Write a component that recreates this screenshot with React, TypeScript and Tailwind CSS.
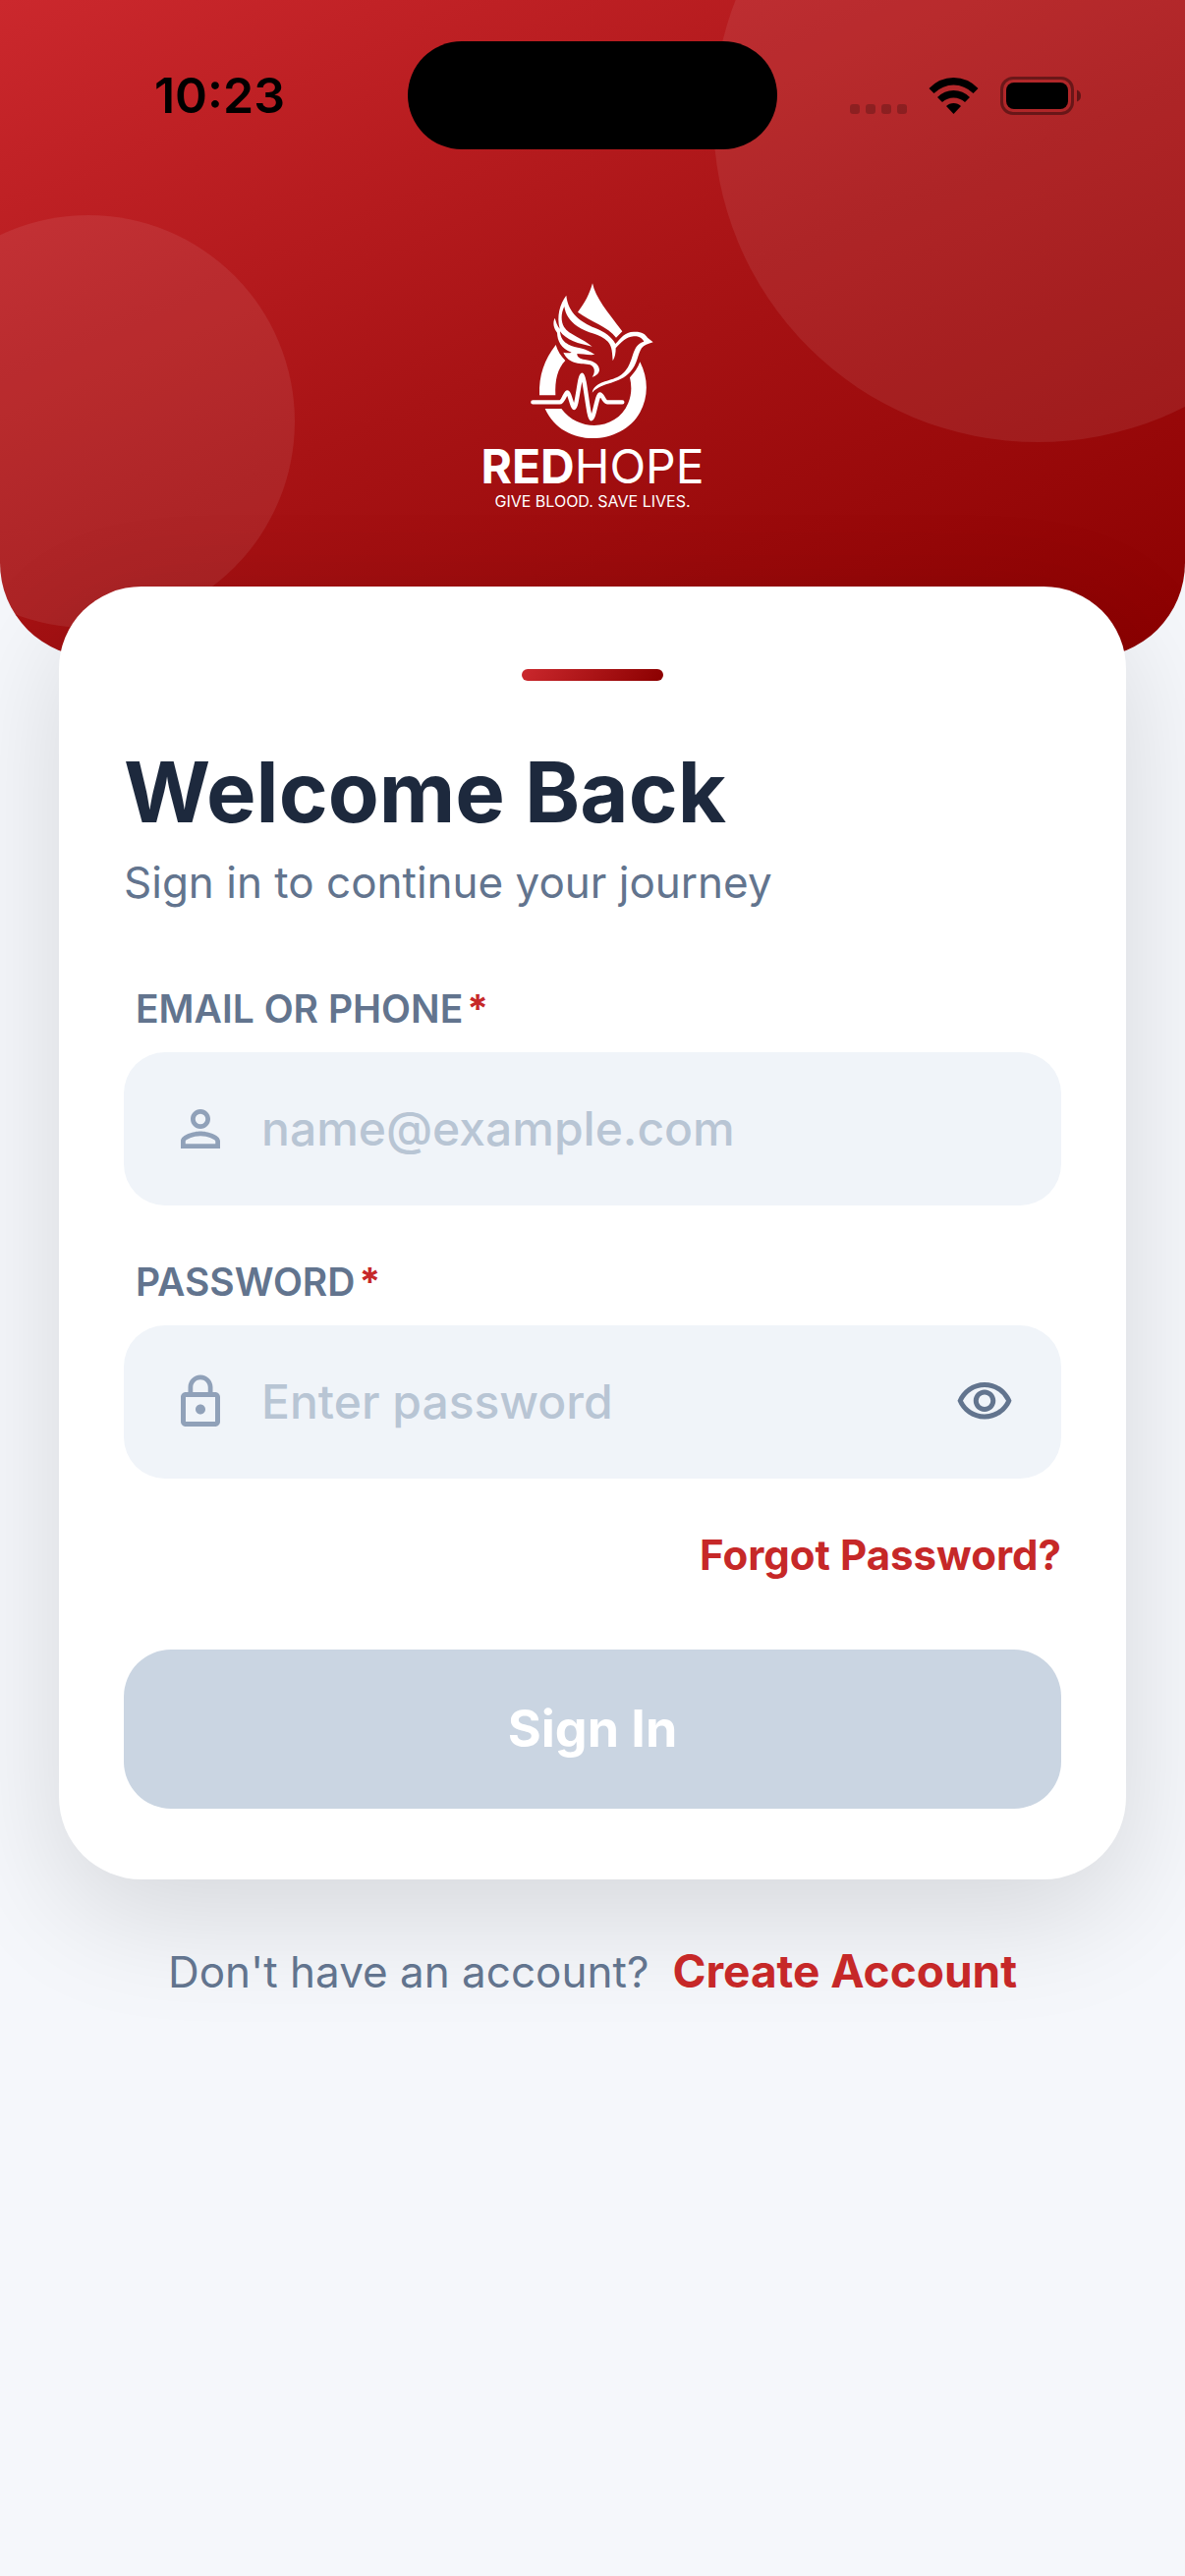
import { useState } from "react";
import type { ReactNode } from "react";
import { MdLockOutline, MdOutlineVisibility, MdOutlineVisibilityOff, MdPersonOutline } from "react-icons/md";

export default function App() {
  const [identifier, setIdentifier] = useState("");
  const [password, setPassword] = useState("");
  const [showPassword, setShowPassword] = useState(false);

  const canSubmit = identifier.trim() !== "" && password !== "";

  return (
    <div className="min-h-screen bg-[#f5f7fb] font-['Inter',sans-serif]">
      <header className="relative overflow-hidden rounded-b-[96px] bg-linear-[157deg] from-[#cb282d] from-0% via-[#a81315] via-50% to-[#8b0000] to-100% pb-[150px]">
        <div className="absolute -right-[180px] -top-[210px] size-[660px] rounded-full bg-white/8" />
        <div className="absolute -left-[120px] top-[219px] size-[420px] rounded-full bg-white/8" />

        <StatusBar />

        <div className="relative mt-[135px] flex flex-col items-center text-white">
          <LogoMark />
          <p className="text-[48px] leading-[52px]">
            <span className="font-bold">RED</span>HOPE
          </p>
          <p className="text-[16px] leading-[18px]">GIVE BLOOD. SAVE LIVES.</p>
        </div>
      </header>

      <main className="relative mx-[60px] -mt-[72px] rounded-[84px] bg-white px-[66px] pb-[72px] pt-[84px] shadow-[0_36px_120px_rgba(0,0,0,0.13)]">
        <div className="mx-auto h-3 w-36 rounded-full bg-linear-[120deg] from-[#cb282d] to-[#8b0000]" />

        <h1 className="mt-[60px] text-[85px] font-bold leading-[108px] text-slate-800">Welcome Back</h1>
        <p className="mt-[10px] text-[44px] leading-[54px] text-slate-500">Sign in to continue your journey</p>

        <form className="mt-[78px]" onSubmit={(event) => event.preventDefault()}>
          <Field id="identifier" label="EMAIL OR PHONE" icon={<MdPersonOutline className="size-[60px]" />}>
            <input
              id="identifier"
              type="text"
              placeholder="name@example.com"
              className="min-w-0 flex-1 bg-transparent text-[48px] font-medium text-slate-800 outline-none placeholder:text-[#b8c5d4]"
              value={identifier}
              onChange={(event) => setIdentifier(event.target.value)}
            />
          </Field>

          <div className="mt-[54px]">
            <Field id="password" label="PASSWORD" icon={<MdLockOutline className="size-[60px]" />}>
              <input
                id="password"
                type={showPassword ? "text" : "password"}
                placeholder="Enter password"
                className="min-w-0 flex-1 bg-transparent text-[48px] font-medium text-slate-800 outline-none placeholder:text-[#b8c5d4]"
                value={password}
                onChange={(event) => setPassword(event.target.value)}
              />
              <button
                type="button"
                aria-label={showPassword ? "Hide password" : "Show password"}
                className="text-slate-500"
                onClick={() => setShowPassword(!showPassword)}
              >
                {showPassword ? (
                  <MdOutlineVisibilityOff className="size-[60px]" />
                ) : (
                  <MdOutlineVisibility className="size-[60px]" />
                )}
              </button>
            </Field>
          </div>

          <div className="mt-[54px] flex justify-end">
            <a href="#forgot" className="text-[42px] font-bold leading-[48px] text-[#c62828]">
              Forgot Password?
            </a>
          </div>

          <button
            type="submit"
            disabled={!canSubmit}
            className="mt-[72px] h-[162px] w-full rounded-[48px] bg-[#c62828] text-[52px] font-bold text-white disabled:bg-slate-300"
          >
            Sign In
          </button>
        </form>
      </main>

      <footer className="relative mt-[66px] flex items-baseline justify-center gap-6 leading-[54px]">
        <span className="text-[44px] text-slate-500">Don't have an account?</span>
        <a href="#register" className="text-[46px] font-bold text-[#c62828]">
          Create Account
        </a>
      </footer>
    </div>
  );
}

function Field({
  id,
  label,
  icon,
  children,
}: {
  id: string;
  label: string;
  icon: ReactNode;
  children: ReactNode;
}) {
  return (
    <div>
      <label htmlFor={id} className="flex gap-1 px-3 text-[39px] font-semibold leading-[48px] text-slate-500">
        {label}
        <span className="font-bold text-[#c62828]">*</span>
      </label>
      <div className="mt-5 flex h-[156px] items-center gap-8 rounded-[42px] bg-[#f0f4f9] px-12 text-slate-400">
        {icon}
        {children}
      </div>
    </div>
  );
}

function StatusBar() {
  return (
    <div className="relative grid grid-cols-[1fr_376px_1fr] pt-[42px] text-black">
      <p className="self-center pl-[32px] text-center text-[50px] font-semibold leading-[60px]">10:23</p>
      <div className="h-[110px] rounded-full bg-black" />
      <div className="flex items-center justify-end gap-[22px] pr-[106px]">
        <svg width="58" height="37" viewBox="0 0 58 37" fillOpacity="0.22" aria-hidden="true">
          <rect x="0" y="27" width="10" height="10" rx="3" />
          <rect x="16" y="27" width="10" height="10" rx="3" />
          <rect x="32" y="27" width="10" height="10" rx="3" />
          <rect x="48" y="27" width="10" height="10" rx="3" />
        </svg>
        <svg width="51" height="37" viewBox="0 0 51 37" aria-hidden="true">
          <path d="M0.5 11Q11 0 25.500 0Q40 0 50.500 11L45.500 16Q36.500 7.500 25.500 7.500Q14.500 7.500 5.500 16Z" />
          <path d="M9 20Q16 13 25.500 13Q35 13 42 20L37 25Q32 20.500 25.500 20.500Q19 20.500 14 25Z" />
          <path d="M18 29Q21 26 25.500 26Q30 26 33 29L25.500 37Z" />
        </svg>
        <svg width="82" height="39" viewBox="0 0 82 39" aria-hidden="true">
          <rect x="1.500" y="1.500" width="72" height="36" rx="11.500" fill="none" stroke="black" strokeOpacity="0.4" strokeWidth="3" />
          <rect x="6" y="6" width="63" height="27" rx="8" />
          <path d="M78 13.500Q82 15 82 19.500Q82 24 78 25.500Z" fillOpacity="0.45" />
        </svg>
      </div>
    </div>
  );
}

// Blood drop with a dove flying through it and a heartbeat line across
function LogoMark() {
  return (
    <svg width="126" height="162" viewBox="240 50 378 486" fill="none" aria-hidden="true">
      <g fill="white">
        <path d="M429 54C438 98 474 140 520 201L501 220C476 186 425 172 384 142C406 113 420 87 429 54Z" />
        <path d="M317 242C322 260 332 276 346 290C322 315 314 350 316 396H267C265 335 282 287 317 242Z" />
        <path d="M574 294C600 345 600 400 574 448C520 548 342 563 284 437H334C390 512 505 502 538 420C549 392 549 368 543 342C556 328 568 312 574 294Z" />
        <path d="M349 91C354 145 395 174 436 190C466 201 489 219 499 239C515 222 527 202 555 202C580 201 590 209 597 220L614 234C598 239 586 243 579 252C567 270 566 302 545 324C510 364 461 354 428 388C436 353 480 355 510 338C550 313 545 276 563 248C569 239 576 235 586 232C580 219 567 215 555 216C531 217 517 235 500 252C500 267 498 280 491 291C489 270 490 247 476 232C452 207 414 208 382 185C360 170 346 148 343 125C332 147 333 171 342 187C358 212 397 220 428 247C388 240 347 226 330 201C331 220 341 234 356 241C377 252 410 250 436 272C415 274 396 269 382 269C382 280 391 285 405 287C426 290 449 297 450 318C450 329 440 337 428 341C438 327 437 309 422 303C397 297 357 304 340 265C350 268 361 267 365 265C332 252 322 229 321 205C310 190 307 174 314 160C318 172 321 184 329 193C319 154 329 118 349 91Z" />
      </g>
      <path
        d="M247 417H329C340 417 346 387 352 387C359 387 367 434 373 434C381 434 390 334 397 334C405 334 417 468 425 468C434 468 443 393 452 393C459 393 464 417 474 417H520"
        stroke="white"
        strokeWidth="13"
        strokeLinecap="round"
        strokeLinejoin="round"
      />
    </svg>
  );
}
